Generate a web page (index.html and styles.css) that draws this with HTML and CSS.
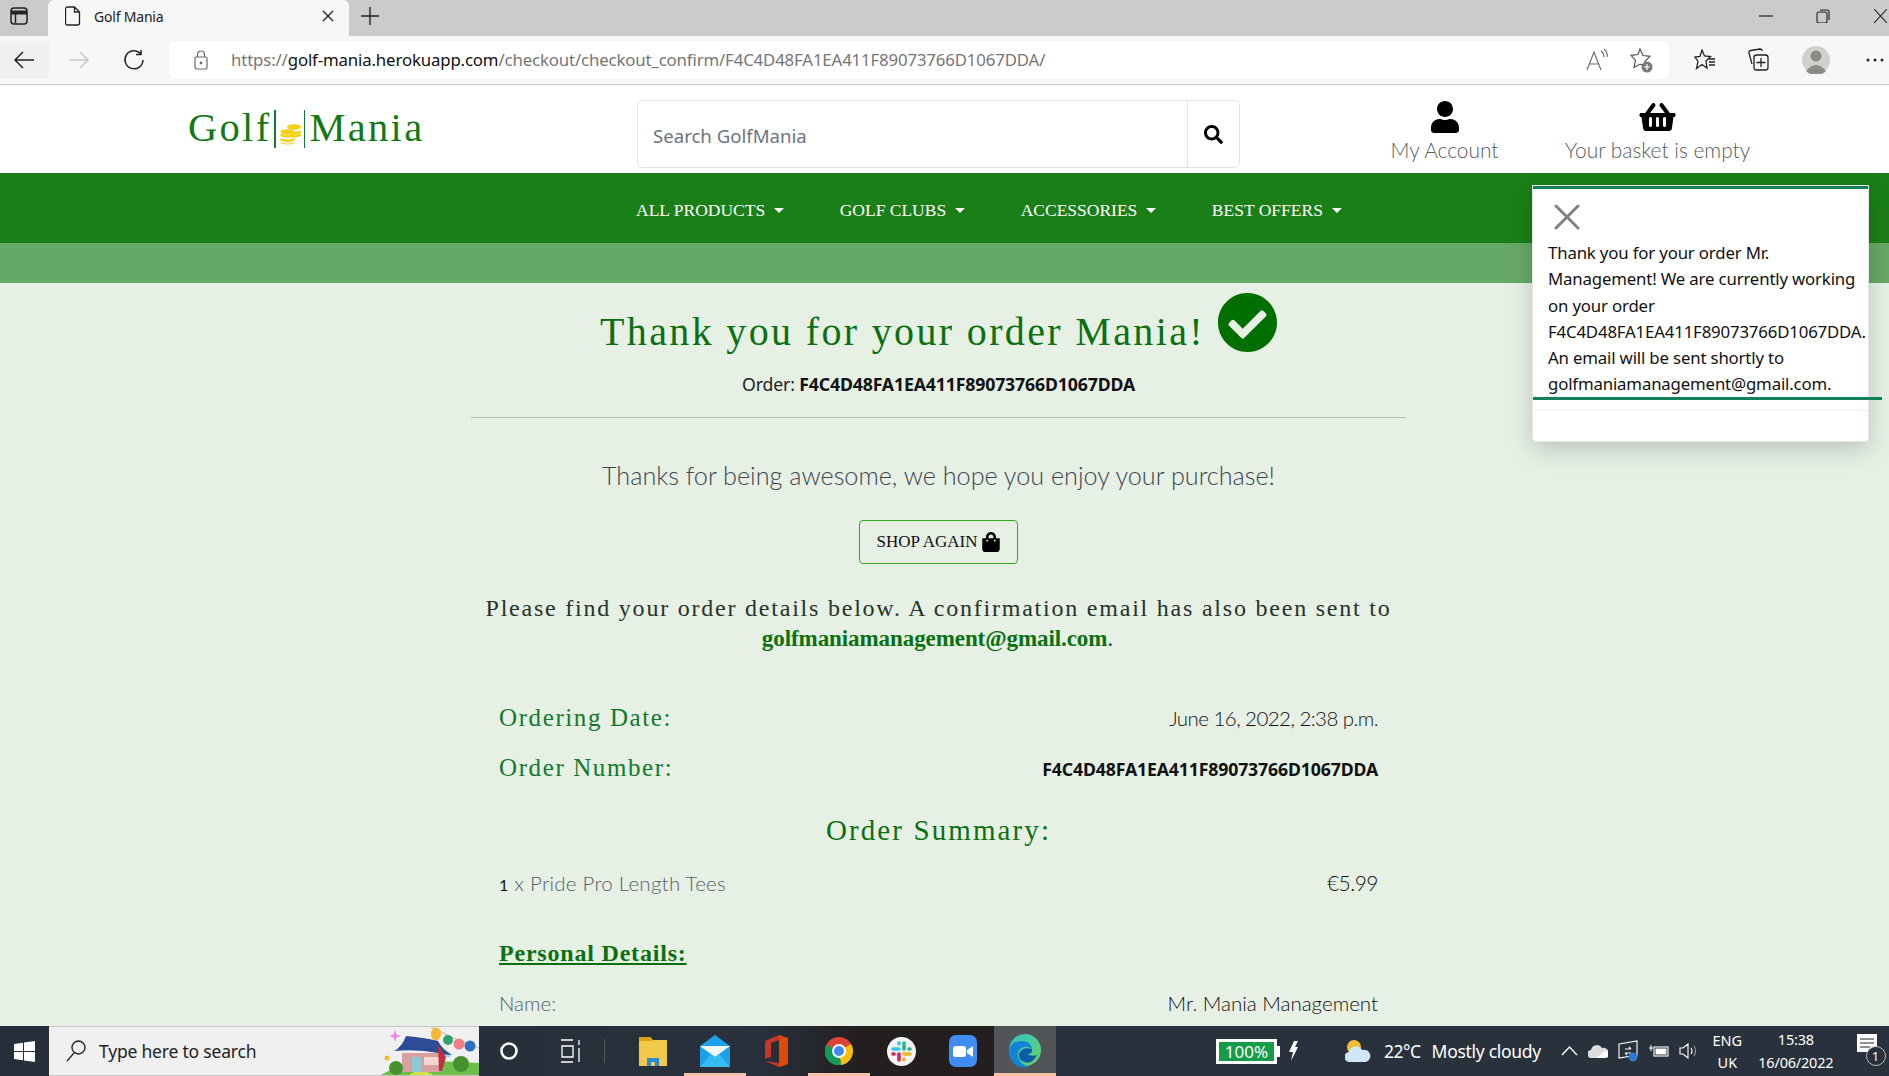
FILE: index.html
```html
<!DOCTYPE html>
<html lang="en">
<head>
<meta charset="utf-8">
<title>Golf Mania</title>
<link rel="stylesheet" href="styles.css">
</head>
<body>
<div class="screen">
  <div class="tabstrip">
    <div class="winbtn"><svg width="20" height="20" viewBox="0 0 20 20" fill="none" stroke="#222" stroke-width="1.5"><rect x="2" y="2" width="16" height="16" rx="3"/><path d="M2 6.5h16" stroke-width="4"/><path d="M6.5 6v11"/></svg></div>
    <div class="tab">
      <svg class="tabdoc" width="16" height="20" viewBox="0 0 16 20" fill="none" stroke="#222" stroke-width="1.3"><path d="M2.5 1h7l5 5v11a2 2 0 0 1-2 2h-10a2 2 0 0 1-2-2V3a2 2 0 0 1 2-2zM9.5 1v5h5"/></svg>
      <span class="tabtitle">Golf Mania</span>
      <svg width="12" height="12" viewBox="0 0 12 12" stroke="#222" stroke-width="1.4"><path d="M1 1l10 10M11 1L1 11"/></svg>
    </div>
    <svg class="newtab" width="18" height="18" viewBox="0 0 18 18" stroke="#222" stroke-width="1.4"><path d="M9 0v18M0 9h18"/></svg>
    <div class="winctl">
      <svg width="14" height="14" viewBox="0 0 14 14" stroke="#222" stroke-width="1.2"><path d="M0 7h14"/></svg>
      <svg width="14" height="14" viewBox="0 0 14 14" fill="none" stroke="#222" stroke-width="1.1"><rect x="1" y="3" width="10" height="11" rx="2"/><path d="M4 1h7a2 2 0 0 1 2 2v8"/></svg>
      <svg width="14" height="14" viewBox="0 0 14 14" stroke="#222" stroke-width="1.1"><path d="M1 0l13 14M14 0L1 14"/></svg>
    </div>
  </div>

  <div class="toolbar">
    <div class="navbtn navbtn-hover"><svg width="22" height="20" viewBox="0 0 22 20" fill="none" stroke="#222" stroke-width="1.5"><path d="M21 10H2M10 2l-8 8 8 8"/></svg></div>
    <div class="navbtn"><svg width="22" height="20" viewBox="0 0 22 20" fill="none" stroke="#c9c9c9" stroke-width="1.5"><path d="M1 10h19M12 2l8 8-8 8"/></svg></div>
    <div class="navbtn"><svg width="22" height="22" viewBox="0 0 22 22" fill="none" stroke="#222" stroke-width="1.5"><path d="M17.5 4.5A9 9 0 1 0 20 11M18 1v4.500h-5"/></svg></div>
    <div class="urlbar">
      <svg class="lock" width="14" height="20" viewBox="0 0 14 20" fill="none" stroke="#666" stroke-width="1.200"><rect x="1" y="7" width="12" height="12" rx="1.500"/><path d="M3.500 7V4.500a3.500 3.500 0 0 1 7 0V7"/><circle cx="7" cy="13" r=".8" fill="#666"/></svg>
      <span class="url">https://<b>golf-mania.herokuapp.com</b>/checkout/checkout_confirm/F4C4D48FA1EA411F89073766D1067DDA/</span>
      <svg class="readaloud" width="24" height="24" viewBox="0 0 24 24" fill="none" stroke="#666" stroke-width="1.100"><path d="M1 22L8 4l7 18M3.500 16h9M15 3q3 2 3 6M18 1q4 3 3 8"/></svg>
      <svg width="24" height="26" viewBox="0 0 24 26" fill="none" stroke="#555" stroke-width="1.200"><path d="M10 2l3 6.500 7 .8-5 5 1 4-6-1-6 3 1.500-7-4.500-5 7-.8z"/><circle cx="17" cy="20" r="5.500" fill="#777" stroke="none"/><path d="M17 17v6M14 20h6" stroke="#fff"/></svg>
    </div>
    <div class="tools">
      <svg width="22" height="22" viewBox="0 0 22 22" fill="none" stroke="#222" stroke-width="1.300"><path d="M8 1l2.500 6 6 .5-4.500 4.500 1 7-5-3.500-5.500 4 1.500-7L1 8l5-.5zM15 10h6M15 13h6M15 16h6"/></svg>
      <svg width="22" height="24" viewBox="0 0 22 24" fill="none" stroke="#222" stroke-width="1.300"><path d="M5 16L2 5q-.5-2 1.500-2.500L13 1q2 0 2 2"/><rect x="7" y="7" width="14" height="15" rx="2.500"/><path d="M14 10v9M9.500 14.500h9"/></svg>
      <svg class="avatar" width="28" height="28" viewBox="0 0 28 28"><circle cx="14" cy="14" r="14" fill="#d0cfcb"/><circle cx="14" cy="10" r="5.500" fill="#8c8b87"/><path d="M4 25q10-12 20 0a14 14 0 0 1-20 0z" fill="#8c8b87"/></svg>
      <svg width="18" height="4" viewBox="0 0 18 4" fill="#222"><circle cx="2" cy="2" r="1.500"/><circle cx="9" cy="2" r="1.500"/><circle cx="16" cy="2" r="1.500"/></svg>
    </div>
  </div>

  <div class="site">
    <header class="masthead">
      <a class="logo">Golf<i class="logobar"></i><svg class="coins" width="21" height="22" viewBox="0 0 21 22" fill="#f6cf0c"><ellipse cx="14" cy="4" rx="7" ry="2.700"/><path d="M7 7.500q7 2.500 14 0v2q-2 2-7 2l-7-2zM11 12.500q6 0 10-2v2q-2 2-9 2z"/><ellipse cx="7.500" cy="9" rx="7" ry="2.700"/><path d="M.5 10.500q7 3.500 14 0v2.500q-7 3-14 0zM.5 15q7 3 14 0v2.500q-7 3-14 0zM.5 19q7 3 14 0v1q-7 3-14 0z"/></svg><i class="logobar"></i>Mania</a>
      <form class="search">
        <span class="search-input">Search GolfMania</span>
        <span class="search-btn"><svg width="19" height="19" viewBox="0 0 512 512"><path d="M505 442.7L405.3 343c-4.500-4.500-10.600-7-17-7H372c27.600-35.300 44-79.700 44-128C416 93.100 322.900 0 208 0S0 93.100 0 208s93.100 208 208 208c48.300 0 92.700-16.400 128-44v16.300c0 6.400 2.500 12.500 7 17l99.700 99.700c9.400 9.400 24.600 9.400 33.900 0l28.300-28.300c9.400-9.400 9.400-24.600.1-34zM208 336c-70.700 0-128-57.200-128-128 0-70.700 57.200-128 128-128 70.700 0 128 57.200 128 128 0 70.700-57.200 128-128 128z"/></svg></span>
      </form>
      <div class="hlinks">
        <a class="hlink hlink-account"><svg width="28" height="32" viewBox="0 0 448 512"><path d="M224 256c70.700 0 128-57.300 128-128S294.700 0 224 0 96 57.300 96 128s57.300 128 128 128zm89.600 32h-16.700c-22.200 10.200-46.900 16-72.900 16s-50.600-5.800-72.900-16h-16.700C60.200 288 0 348.200 0 422.400V464c0 26.500 21.500 48 48 48h352c26.500 0 48-21.500 48-48v-41.600c0-74.200-60.200-134.400-134.400-134.400z"/></svg><span>My Account</span></a>
        <a class="hlink hlink-basket"><svg width="37" height="32" viewBox="0 0 576 512"><path d="M576 216v16c0 13.255-10.745 24-24 24h-8l-26.113 182.788C514.509 462.435 494.257 480 470.370 480H105.630c-23.887 0-44.139-17.565-47.518-41.212L32 256h-8c-13.255 0-24-10.745-24-24v-16c0-13.255 10.745-24 24-24h67.341l106.780-146.821c10.395-14.292 30.407-17.453 44.701-7.058 14.293 10.395 17.453 30.408 7.058 44.701L170.477 192h235.046L326.120 82.821c-10.395-14.292-7.234-34.306 7.059-44.701 14.291-10.395 34.306-7.235 44.701 7.058L484.659 192H552c13.255 0 24 10.745 24 24zM312 392V280c0-13.255-10.745-24-24-24s-24 10.745-24 24v112c0 13.255 10.745 24 24 24s24-10.745 24-24zm112 0V280c0-13.255-10.745-24-24-24s-24 10.745-24 24v112c0 13.255 10.745 24 24 24s24-10.745 24-24zm-224 0V280c0-13.255-10.745-24-24-24s-24 10.745-24 24v112c0 13.255 10.745 24 24 24s24-10.745 24-24z"/></svg><span>Your basket is empty</span></a>
      </div>
    </header>

    <nav class="mainnav">
      <a class="navlink">ALL PRODUCTS</a>
      <a class="navlink">GOLF CLUBS</a>
      <a class="navlink">ACCESSORIES</a>
      <a class="navlink">BEST OFFERS</a>
    </nav>
    <div class="band"></div>

    <main class="content">
      <div class="title-row">
        <h1 class="title">Thank you for your order Mania!</h1>
        <svg class="title-check" width="59" height="59" viewBox="8 8 496 496" fill="#006f00"><path d="M504 256c0 136.967-111.033 248-248 248S8 392.967 8 256 119.033 8 256 8s248 111.033 248 248zM227.314 387.314l184-184c6.248-6.248 6.248-16.379 0-22.627l-22.627-22.627c-6.248-6.249-16.379-6.249-22.628 0L216 308.118l-70.059-70.059c-6.248-6.248-16.379-6.248-22.628 0l-22.627 22.627c-6.248 6.248-6.248 16.379 0 22.627l104 104c6.249 6.249 16.379 6.249 22.628.001z"/></svg>
      </div>
      <p class="order-line">Order: <b>F4C4D48FA1EA411F89073766D1067DDA</b></p>
      <hr class="rule">
      <p class="thanks">Thanks for being awesome, we hope you enjoy your purchase!</p>
      <a class="shop-btn">SHOP AGAIN <svg width="18" height="20" viewBox="0 0 448 512"><path d="M352 160v-32C352 57.420 294.579 0 224 0 153.420 0 96 57.420 96 128v32H0v272c0 44.183 35.817 80 80 80h288c44.183 0 80-35.817 80-80V160h-96zm-192-32c0-35.290 28.710-64 64-64s64 28.710 64 64v32H160v-32zm160 120c-13.255 0-24-10.745-24-24s10.745-24 24-24 24 10.745 24 24-10.745 24-24 24zm-192 0c-13.255 0-24-10.745-24-24s10.745-24 24-24 24 10.745 24 24-10.745 24-24 24z"/></svg></a>
      <p class="find">Please find your order details below. A confirmation email has also been sent to<br><b>golfmaniamanagement@gmail.com</b>.</p>
      <div class="details">
        <div class="row row-date"><span class="label">Ordering Date:</span><span class="value value-date">June 16, 2022, 2:38 p.m.</span></div>
        <div class="row row-num"><span class="label">Order Number:</span><b class="value-id">F4C4D48FA1EA411F89073766D1067DDA</b></div>
        <h2 class="summary">Order Summary:</h2>
        <div class="row row-item"><span class="item item-line"><b>1</b> x Pride Pro Length Tees</span><span class="value price">€5.99</span></div>
        <h3 class="personal">Personal Details:</h3>
        <div class="row row-name"><span class="item">Name:</span><span class="value">Mr. Mania Management</span></div>
      </div>
    </main>

    <aside class="toast">
      <div class="toast-top"></div>
      <svg class="toast-x" width="26" height="26" viewBox="0 0 26 26" stroke="#808080" stroke-width="3" stroke-linecap="round"><path d="M2 2l22 22M24 2L2 24"/></svg>
      <p class="toast-text">Thank you for your order Mr. Management! We are currently working on your order F4C4D48FA1EA411F89073766D1067DDA. An email will be sent shortly to golfmaniamanagement@gmail.com.</p>
      <div class="toast-line"></div>
      <div class="toast-foot"></div>
    </aside>
  </div>

  <div class="taskbar">
    <div class="start"><svg width="21" height="21" viewBox="0 0 21 21" fill="#fff"><path d="M0 3l9-1.300V10H0zM10 1.500L21 0v10H10zM0 11h9v8.300L0 18zM10 11h11v10l-11-1.500z"/></svg></div>
    <div class="tb-search">
      <svg width="20" height="22" viewBox="0 0 20 22" fill="none" stroke="#222" stroke-width="1.400"><circle cx="12.500" cy="7.500" r="6.500"/><path d="M8 13l-7 8"/></svg>
      <span class="tb-search-text">Type here to search</span>
      <svg class="tb-art" width="100" height="48" viewBox="0 0 100 48"><path d="M2 48Q30 30 100 36V48z" fill="#6cc04a"/><path d="M30 48q12-8 24 0z" fill="#d5e04a"/><path d="M52 0q22 12 48 21" fill="none" stroke="#bbb"/><ellipse cx="57" cy="7" rx="5" ry="6.500" fill="#f7b731"/><circle cx="69" cy="13" r="5" fill="#2fa36b"/><circle cx="80" cy="17" r="5.500" fill="#ef7f85"/><circle cx="91" cy="19" r="5.500" fill="#2f6fc0"/><path d="M16 3l1.500 4.500L22 9l-4.500 1.500L16 15l-1.500-4.500L10 9l4.500-1.500z" fill="#e58ae8"/><circle cx="69" cy="28" r="2.500" fill="#8fdcf0"/><circle cx="8" cy="31" r="2.500" fill="#f7b731"/><rect x="23" y="26" width="39" height="19" fill="#d9a0a0"/><rect x="33" y="30" width="9" height="15" fill="#8ccbd6"/><rect x="45" y="30" width="15" height="8" fill="#f3d9d0"/><path d="M15 24q8-4 12-15 20 2 32 5 4 8 14 14-8 0-14-2-20-4-44-2z" fill="#2d4b96"/><path d="M59 18l8 12-4 14h-3z" fill="#c22f3a"/><circle cx="17" cy="41" r="7" fill="#46922e"/><circle cx="82" cy="37" r="8" fill="#46922e"/></svg>
    </div>
    <div class="tb-icon tb-first"><svg width="18" height="18" viewBox="0 0 18 18" fill="none" stroke="#fff" stroke-width="2.600"><circle cx="9" cy="9" r="7.500"/></svg></div>
    <div class="tb-icon"><svg width="20" height="24" viewBox="0 0 20 24" fill="none" stroke="#fff" stroke-width="1.300"><path d="M0 1h12M1 7h11v11H1zM0 23h12M18 1v5M18 9v14"/></svg></div>
    <div class="tb-sep"></div>
    <div class="tb-icon"><svg width="28" height="30" viewBox="0 0 28 30"><path d="M0 1h11l3 3h14v26H0z" fill="#f3c94a"/><path d="M0 1h11l3 4H0z" fill="#e0a113"/><path d="M8 22h12v8h-4v-4h-4v4H8z" fill="#2b8ad6"/></svg></div>
    <div class="tb-icon tb-open"><svg width="30" height="32" viewBox="0 0 30 32"><path d="M0 11L15 0l15 11v21H0z" fill="#1aa1e8"/><path d="M0 11h30L15 22z" fill="#f3f6fa"/><path d="M0 32l11-13 4 3 4-3 11 13z" fill="#35bdf0"/></svg></div>
    <div class="tb-icon"><svg width="24" height="32" viewBox="0 0 24 32"><path d="M0 6l14-6 9 3v26l-9 3-14-6 14 2V5l-8 3v14l-6 2z" fill="#c8362a"/><path d="M14 0l9 3v26l-9 3z" fill="#dc4a08"/></svg></div>
    <div class="tb-icon tb-open"><svg width="28" height="28" viewBox="0 0 28 28"><circle cx="14" cy="14" r="14" fill="#db4437"/><path d="M14 14L26 7a14 14 0 0 1-10 21z" fill="#f4c20d"/><path d="M14 14l2 14A14 14 0 0 1 1 8z" fill="#0f9d58"/><circle cx="14" cy="14" r="7" fill="#fff"/><circle cx="14" cy="14" r="5" fill="#4285f4"/></svg></div>
    <div class="tb-icon"><svg width="29" height="29" viewBox="0 0 29 29"><circle cx="14.500" cy="14.500" r="14.500" fill="#f4f4f4"/><g stroke-width="3.600" stroke-linecap="round"><path d="M6 12h6" stroke="#36c5f0"/><path d="M12 6v1" stroke="#36c5f0"/><path d="M17 6v6" stroke="#2eb67d"/><path d="M23 12h-1" stroke="#2eb67d"/><path d="M17 17h6" stroke="#ecb22e"/><path d="M17 23v-1" stroke="#ecb22e"/><path d="M12 17v6" stroke="#e01e5a"/><path d="M6 17h1" stroke="#e01e5a"/></g></svg></div>
    <div class="tb-icon"><svg width="28" height="32" viewBox="0 0 28 32"><rect width="28" height="32" rx="7" fill="#3f8cf3"/><rect x="4" y="11" width="13" height="11" rx="2.500" fill="#fff"/><path d="M18 15l6-4v11l-6-4z" fill="#fff"/></svg></div>
    <div class="tb-icon tb-active"><svg width="32" height="34" viewBox="0 0 32 34"><defs><linearGradient id="edgeA" x1="0" y1="0" x2="1" y2="1"><stop offset="0" stop-color="#31c4c9"/><stop offset="1" stop-color="#69d45f"/></linearGradient></defs><circle cx="16" cy="16" r="16" fill="url(#edgeA)"/><path d="M0 16Q2 6 15 7q7 1 8 8-8-5-13 1-3 5 1 11 3 4 9 6-12 2-17-6-3-5-3-11z" fill="#1283d8"/><path d="M10 20q3-8 13-5 1 5-5 5 4 3 10 1-5 10-13 7-6-3-5-8z" fill="#0e5ba8"/></svg></div>
    <div class="tb-spacer"></div>
    <div class="batt"><span class="batt-box">100%</span><i class="batt-nub"></i><svg width="10" height="20" viewBox="0 0 10 20" fill="#fff"><path d="M6 0h4L7 6h3L3 20l2-9H1z"/></svg></div>
    <svg class="weather" width="26" height="24" viewBox="0 0 26 24"><circle cx="9" cy="8" r="7" fill="#f2c037"/><path d="M5 23a5 5 0 0 1-1-10 7 7 0 0 1 13-2 6 6 0 0 1 4 12z" fill="#cfe7f9"/></svg>
    <span class="tb-temp">22°C</span>
    <span class="tb-weather">Mostly cloudy</span>
    <svg class="tray tray-chev" width="17" height="10" viewBox="0 0 17 10" fill="none" stroke="#fff" stroke-width="1.300"><path d="M1 9l7.500-8L16 9"/></svg>
    <svg class="tray" width="20" height="14" viewBox="0 0 20 14"><path d="M4 14a4 4 0 0 1-1-8 6 6 0 0 1 11-2 5 5 0 0 1 3 10z" fill="#ddd"/><path d="M8 14h9a3 3 0 0 0 0-7z" fill="#fff"/></svg>
    <svg class="tray" width="21" height="22" viewBox="0 0 21 22" fill="none" stroke="#fff" stroke-width="1.100"><path d="M1 4l18-3v14l-18 3z"/><path d="M7 9h6M13 9l-2-2M13 13H7M7 13l2 2"/><circle cx="15" cy="17" r="4.500" fill="#2b7bd0" stroke="none"/></svg>
    <svg class="tray" width="20" height="14" viewBox="0 0 20 14" fill="none" stroke="#fff" stroke-width="1.100"><rect x="5" y="3" width="14" height="9"/><rect x="6.500" y="4.500" width="11" height="6" fill="#fff" stroke="none"/><path d="M0 4h4M2 1v6"/></svg>
    <svg class="tray tray-sound" width="20" height="16" viewBox="0 0 20 16" fill="none" stroke="#fff" stroke-width="1.100"><path d="M1 5h3l5-4v14l-5-4H1zM12 5q2 3 0 6"/><path d="M15 3q3 5 0 10" stroke="#999"/></svg>
    <div class="tb-lang"><span>ENG</span><span>UK</span></div>
    <div class="tb-clock"><span>15:38</span><span>16/06/2022</span></div>
    <div class="tb-notify"><svg width="30" height="34" viewBox="0 0 30 34"><path d="M0 0h20v18H0z" fill="#fff"/><path d="M3 5h14M3 9h14M3 13h10" stroke="#222"/><circle cx="19" cy="22" r="9.500" fill="#27303c" stroke="#bbb"/></svg><span class="tb-notify-n">1</span></div>
  </div>
</div>
</body>
</html>
```

FILE: styles.css
```css
* { box-sizing: border-box; }
html, body { margin: 0; height: 100%; overflow: hidden; }
.screen { width: 1889px; height: 1076px; display: flex; flex-direction: column; font-family: "Open Sans", "Noto Sans", sans-serif; overflow: hidden; }

/* browser chrome */
.tabstrip { height: 36px; background: #cbcbcb; display: flex; align-items: center; flex: none; }
.winbtn { width: 48px; height: 36px; display: flex; align-items: center; padding: 0 0 4px 9px; }
.tab { width: 301px; height: 36px; background: #f7f7f7; border-radius: 6px 6px 0 0; display: flex; align-items: center; padding: 0 0 4px 17px; }
.tabtitle { font-family: "Noto Sans", sans-serif; font-size: 14px; color: #222; margin-left: 13px; width: 228px; letter-spacing: -.2px; }
.newtab { margin: 0 0 4px 12px; }
.winctl { margin-left: auto; display: flex; align-items: center; gap: 43px; padding: 0 2px 4px 0; }

.toolbar { height: 49px; background: #f7f7f7; border-bottom: 1px solid #c6c6c6; display: flex; align-items: center; flex: none; padding-bottom: 1px; }
.navbtn { width: 49px; height: 37px; display: flex; align-items: center; justify-content: center; margin-right: 6px; padding-right: 2px; }
.navbtn-hover { background: #f0f0f0; }
.urlbar { margin-left: 4px; width: 1500px; height: 38px; background: #fff; border-radius: 6px; display: flex; align-items: center; padding: 0 15px 0 25px; box-shadow: 0 0 1px #ddd; }
.lock { margin-right: 23px; }
.url { font-family: "Noto Sans", sans-serif; font-size: 16.8px; color: #767676; white-space: nowrap; flex: 1; letter-spacing: -.14px; }
.url b { font-weight: 400; color: #111; }
.readaloud { margin-right: 20px; }
.tools { display: flex; align-items: center; padding-left: 25px; gap: 31px; }
.avatar { margin: 0 1px 0 2px; }
.tools svg:last-child { margin-left: 4px; }

/* site */
.site { flex: 1; position: relative; overflow: hidden; background: #e6f0e5; display: flex; flex-direction: column; min-height: 0; }
.masthead { height: 88px; background: #fff; display: flex; align-items: flex-start; flex: none; padding-left: 188px; }
.logo { width: 449px; margin-top: 21px; display: flex; align-items: center; height: 42px; font-family: "Liberation Serif", serif; font-size: 40.5px; letter-spacing: 2.3px; color: #137a13; }
.logobar { display: inline-block; width: 1.5px; height: 38px; background: #0e7a40; margin: 4px 4px 0 3px; }
.coins { margin: 14px 0 0 0; }
.search { width: 603px; height: 68px; margin-top: 15px; border: 1px solid #dee2e6; border-radius: 5px; display: flex; }
.search-input { flex: 1; font-family: "Noto Sans", sans-serif; font-size: 18.6px; color: #6c757d; padding: 22px 0 0 15px; }
.search-btn { width: 52px; border-left: 1px solid #dee2e6; display: flex; align-items: center; justify-content: center; }
.hlinks { display: flex; }
.hlink { display: flex; flex-direction: column; align-items: center; padding-top: 16px; font-family: Lato, sans-serif; font-weight: 300; font-size: 20.9px; color: #565c62; white-space: nowrap; }
.hlink span { margin-top: 4px; }
.hlink-account { width: 107px; margin-left: 151px; }
.hlink-basket { width: 187px; margin-left: 66px; }

.mainnav { height: 70px; background: #1a7f17; flex: none; display: flex; align-items: center; padding: 4px 0 0 636px; gap: 55.5px; }
.navlink { font-family: "Liberation Serif", serif; font-size: 17.5px; color: #fff; display: flex; align-items: center; white-space: nowrap; }
.navlink::after { content: ""; margin-left: 9px; border-top: 5px solid #fff; border-left: 5px solid transparent; border-right: 5px solid transparent; }
.band { height: 40px; background: #66a866; flex: none; }

.content { width: 935px; margin-left: 471px; display: flex; flex-direction: column; align-items: center; flex: none; }
.title-row { display: flex; align-items: flex-start; margin-top: 10px; height: 62px; }
.title { margin: 17px 13px 0 0; font-family: "Liberation Serif", serif; font-weight: 400; font-size: 40px; line-height: 44px; letter-spacing: 2.35px; color: #0a7010; white-space: nowrap; }
.title-check { flex: none; }
.order-line { margin: 18px 0 0; font-family: "Noto Sans", sans-serif; font-size: 17.7px; line-height: 22px; color: #222; white-space: nowrap; letter-spacing: -.15px; }
.order-line b { font-weight: 700; color: #111; }
.rule { width: 100%; margin: 22px 0 0; border: 0; border-top: 1px solid #b4bcb4; }
.thanks { margin: 42px 0 0; font-family: Lato, sans-serif; font-weight: 300; font-size: 25.2px; line-height: 30px; color: #3d4650; white-space: nowrap; }
.shop-btn { margin-top: 30px; width: 159px; height: 44px; border: 1px solid #38a811; border-radius: 4px; display: flex; align-items: center; justify-content: center; gap: 5px; font-family: "Liberation Serif", serif; font-size: 17px; color: #111; white-space: nowrap; }
.find { margin: 29px 0 0; font-family: "Liberation Serif", serif; font-size: 24px; line-height: 30px; letter-spacing: 1.78px; color: #26332a; text-align: center; white-space: nowrap; }
.find b { color: #0a7010; font-size: 23px; letter-spacing: -.08px; }
.details { width: 100%; padding: 0 28px; margin-top: 49px; }
.row { display: flex; justify-content: space-between; align-items: baseline; }
.label { font-family: "Liberation Serif", serif; font-size: 25px; letter-spacing: 1.6px; color: #117a2a; }
.value { font-family: Lato, sans-serif; font-size: 20.5px; font-weight: 300; color: #111; white-space: nowrap; }
.value-date { letter-spacing: -.55px; }
.row-date { height: 29px; line-height: 29px; }
.row-num { height: 29px; line-height: 29px; margin-top: 21px; }
.value-id { font-family: "Noto Sans", sans-serif; font-size: 17.7px; font-weight: 700; color: #111; letter-spacing: -.15px; }
.summary { margin: 30px 0 0; font-family: "Liberation Serif", serif; font-weight: 400; font-size: 29px; line-height: 36px; letter-spacing: 2.1px; color: #0a7010; text-align: center; }
.row-item { margin-top: 20px; line-height: 30px; }
.item { font-family: Lato, sans-serif; font-weight: 300; font-size: 20.5px; color: #56606a; white-space: nowrap; }
.item-line { letter-spacing: .25px; }
.item b { font-weight: 400; color: #111; font-size: 16px; }
.price { font-size: 21px; letter-spacing: -.5px; }
.personal { margin: 38px 0 0; font-family: "Liberation Serif", serif; font-weight: 700; font-size: 24px; line-height: 30px; letter-spacing: .8px; color: #0a7010; text-decoration: underline; }
.row-name { margin-top: 20px; line-height: 30px; }

/* toast */
.toast { position: absolute; left: 1532px; top: 100px; width: 337px; height: 257px; background: #fff; border: 1px solid #e6e6e6; border-radius: 0 0 4px 4px; box-shadow: 0 8px 24px rgba(0,0,0,.18); }
.toast-top { height: 3px; background: #14805a; }
.toast-x { display: block; margin: 15px 0 0 21px; }
.toast-text { margin: 10px 0 0 15px; width: 322px; font-family: "Noto Sans", sans-serif; font-size: 16.8px; line-height: 26.3px; color: #111; letter-spacing: -.16px; }
.toast-line { height: 3px; width: 349px; background: #14805a; margin-top: -1px; }
.toast-foot { height: 1px; background: #eee; margin-top: 10px; }

/* taskbar */
.taskbar { height: 50px; background: linear-gradient(90deg, #262e3a 0, #28303c 760px, #231f1f 860px, #231f1f 995px, #29313d 1060px); display: flex; align-items: center; flex: none; color: #fff; font-family: "Noto Sans", sans-serif; }
.start { width: 49px; display: flex; justify-content: center; }
.tb-search { width: 430px; height: 50px; background: #f0f0f0; border-top: 1px solid #c8c8c8; border-bottom: 1px solid #c8c8c8; display: flex; align-items: center; padding-left: 17px; overflow: hidden; }
.tb-search-text { font-size: 17.5px; color: #222; margin-left: 13px; letter-spacing: -.2px; flex: 1; }
.tb-art { flex: none; }
.tb-icon { width: 62px; height: 50px; display: flex; align-items: center; justify-content: center; flex: none; }
.tb-first { margin-left: -1px; }
.tb-sep { width: 1px; height: 24px; background: #555; margin: 0 17px 0 2px; }
.tb-open { border-bottom: 3px solid #f6c2a9; padding-top: 3px; }
.tb-active { background: #525558; border-bottom: 3px solid #f6c2a9; padding-top: 3px; }
.tb-spacer { width: 160px; flex: none; }
.batt { display: flex; align-items: center; }
.batt-box { width: 61px; height: 25px; border: 3px solid #fff; background: #149c4a; font-size: 17px; line-height: 19px; text-align: center; color: #fff; }
.batt-nub { width: 3px; height: 11px; background: #fff; margin-right: 8px; }
.weather { margin-left: 47px; flex: none; }
.tb-temp { font-size: 17.5px; margin-left: 13px; letter-spacing: -.5px; }
.tb-weather { font-size: 17.5px; margin-left: 11px; letter-spacing: -.3px; white-space: nowrap; }
.tray { flex: none; margin-left: 10px; }
.tray-chev { margin-left: 20px; }
.tb-lang { width: 29px; margin-left: 14px; display: flex; flex-direction: column; align-items: center; font-size: 14.5px; line-height: 22px; }
.tb-clock { width: 80px; margin-left: 14px; display: flex; flex-direction: column; align-items: center; font-size: 14.5px; line-height: 23px; letter-spacing: -.2px; }
.tb-notify { margin-left: 21px; width: 30px; height: 34px; position: relative; flex: none; }
.tb-notify-n { position: absolute; left: 15px; top: 12px; font-size: 13px; line-height: 20px; }
```
